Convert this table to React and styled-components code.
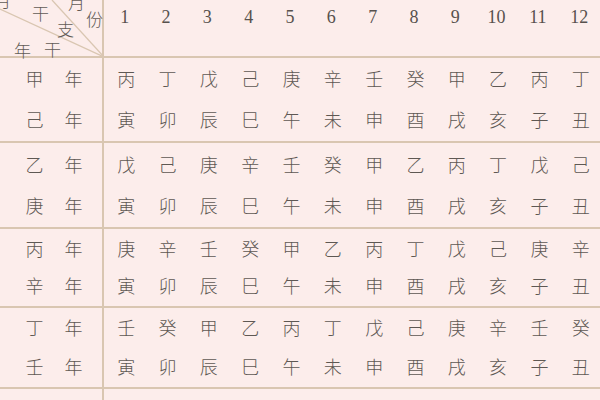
import React from "react";
import styled, { createGlobalStyle } from "styled-components";

const Global = createGlobalStyle`
  html, body { margin: 0; padding: 0; background: #fcedeb; }
  body { width: 600px; height: 400px; overflow: hidden; }
`;

const LINE = "#d9c6b1";

const Page = styled.div`
  width: 600px;
  height: 400px;
  background: #fcedeb;
  font-family: "Noto Sans CJK SC", "Noto Sans CJK TC", sans-serif;
  color: #5e5853;
  overflow: hidden;
`;

const Row = styled.div`
  display: grid;
  grid-template-columns: 104px repeat(12, 41.33px);
  height: ${(p) => p.$h}px;
  border-bottom: 2px solid ${LINE};
  box-sizing: border-box;
`;

const DiagCell = styled.div`
  position: relative;
  border-right: 2px solid ${LINE};
  font-size: 17px;
  font-weight: 300;
  color: #625b56;
`;

const DiagLines = styled.svg`
  position: absolute;
  inset: 0;
  width: 104px;
  height: 57px;
`;

const DiagText = styled.span`
  position: absolute;
  left: ${(p) => p.$x}px;
  top: ${(p) => p.$y}px;
  line-height: 1;
`;

const Num = styled.div`
  font-family: "Liberation Serif", serif;
  font-size: 18px;
  color: #57514d;
  text-align: center;
  padding-top: 7px;
`;

const YearCell = styled.div`
  border-right: 2px solid ${LINE};
  display: grid;
  grid-template-rows: repeat(2, 1fr);
  padding: 0 0 2px;
`;

const YearLine = styled.div`
  display: flex;
  align-items: center;
  justify-content: center;
  gap: 21px;
  font-size: 18px;
  font-weight: 300;
  padding-left: 6px;
`;

const Months = styled.div`
  grid-column: 2 / span 12;
  display: grid;
  grid-template-columns: repeat(12, 41.33px);
  grid-template-rows: repeat(2, 1fr);
  padding: 0 0 2px;
`;

const Cell = styled.div`
  display: flex;
  align-items: center;
  justify-content: center;
  font-size: 18px;
  font-weight: 300;
  padding-left: 3px;
`;

const groups = [
  { y: ["甲", "己"], top: "丙丁戊己庚辛壬癸甲乙丙丁", h: 85 },
  { y: ["乙", "庚"], top: "戊己庚辛壬癸甲乙丙丁戊己", h: 86 },
  { y: ["丙", "辛"], top: "庚辛壬癸甲乙丙丁戊己庚辛", h: 79 },
  { y: ["丁", "壬"], top: "壬癸甲乙丙丁戊己庚辛壬癸", h: 81 },
  { y: ["戊", "癸"], top: "甲乙丙丁戊己庚辛壬癸甲乙", h: 83 },
];
const branches = "寅卯辰巳午未申酉戌亥子丑";

export default function App() {
  return (
    <Page>
      <Global />
      <Row $h={58}>
        <DiagCell>
          <DiagLines viewBox="0 0 104 57">
            <line x1="0" y1="9" x2="104" y2="57" stroke={LINE} strokeWidth="1.3" />
            <line x1="52" y1="0" x2="104" y2="57" stroke={LINE} strokeWidth="1.3" />
          </DiagLines>
          <DiagText $x={-6} $y={-9}>月</DiagText>
          <DiagText $x={32} $y={4}>干</DiagText>
          <DiagText $x={57} $y={20}>支</DiagText>
          <DiagText $x={68} $y={-7}>月</DiagText>
          <DiagText $x={86} $y={10}>份</DiagText>
          <DiagText $x={14} $y={41}>年</DiagText>
          <DiagText $x={44} $y={40}>干</DiagText>
        </DiagCell>
        {Array.from({ length: 12 }, (_, i) => (
          <Num key={i}>{i + 1}</Num>
        ))}
      </Row>
      {groups.map((g, gi) => (
        <Row key={gi} $h={g.h}>
          <YearCell>
            <YearLine>
              <span>{g.y[0]}</span>
              <span>年</span>
            </YearLine>
            <YearLine>
              <span>{g.y[1]}</span>
              <span>年</span>
            </YearLine>
          </YearCell>
          <Months>
            {g.top.split("").map((c, i) => (
              <Cell key={"t" + i}>{c}</Cell>
            ))}
            {branches.split("").map((c, i) => (
              <Cell key={"b" + i}>{c}</Cell>
            ))}
          </Months>
        </Row>
      ))}
    </Page>
  );
}
